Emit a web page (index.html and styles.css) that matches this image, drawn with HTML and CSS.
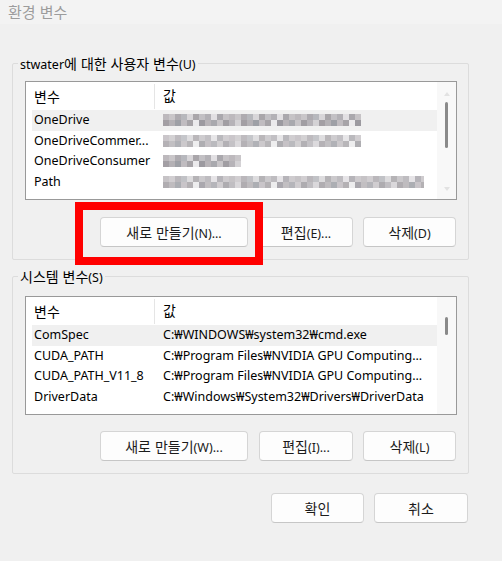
FILE: index.html
```html
<!DOCTYPE html>
<html lang="ko">
<head>
<meta charset="utf-8">
<title>환경 변수</title>
<link rel="stylesheet" href="styles.css">
</head>
<body>
<div class="dialog">
  <div class="titlebar">환경 변수</div>
  <div class="content">
    <fieldset class="group group-user">
      <legend>stwater<span class="ko">에 대한 사용자 변수</span>(U)</legend>
      <div class="list">
        <div class="list-body">
          <div class="header"><div class="c1"><span class="ko">변수</span></div><div class="c2"><span class="ko">값</span></div></div>
          <div class="row sel"><div class="c1">OneDrive</div><div class="c2"><span class="mosaic m1"></span></div></div>
          <div class="row"><div class="c1">OneDriveCommer...</div><div class="c2"><span class="mosaic m2"></span></div></div>
          <div class="row"><div class="c1">OneDriveConsumer</div><div class="c2"><span class="mosaic m3"></span></div></div>
          <div class="row"><div class="c1">Path</div><div class="c2"><span class="mosaic m4"></span></div></div>
        </div>
        <div class="scrollbar">
          <span class="arrow arrow-up"></span>
          <span class="thumb thumb-user"></span>
          <span class="arrow arrow-down"></span>
        </div>
      </div>
      <div class="buttons">
        <button class="btn btn-new"><span class="ko">새로 만들기</span>(N)...</button>
        <button class="btn btn-edit"><span class="ko">편집</span>(E)...</button>
        <button class="btn btn-del"><span class="ko">삭제</span>(D)</button>
      </div>
      <div class="highlight-box"></div>
    </fieldset>

    <fieldset class="group group-sys">
      <legend><span class="ko">시스템 변수</span>(S)</legend>
      <div class="list">
        <div class="list-body">
          <div class="header"><div class="c1"><span class="ko">변수</span></div><div class="c2"><span class="ko">값</span></div></div>
          <div class="row sel"><div class="c1">ComSpec</div><div class="c2">C:₩WINDOWS₩system32₩cmd.exe</div></div>
          <div class="row"><div class="c1">CUDA_PATH</div><div class="c2">C:₩Program Files₩NVIDIA GPU Computing...</div></div>
          <div class="row"><div class="c1">CUDA_PATH_V11_8</div><div class="c2">C:₩Program Files₩NVIDIA GPU Computing...</div></div>
          <div class="row"><div class="c1">DriverData</div><div class="c2">C:₩Windows₩System32₩Drivers₩DriverData</div></div>
        </div>
        <div class="scrollbar">
          <span class="thumb thumb-sys"></span>
        </div>
      </div>
      <div class="buttons">
        <button class="btn btn-new"><span class="ko">새로 만들기</span>(W)...</button>
        <button class="btn btn-edit"><span class="ko">편집</span>(I)...</button>
        <button class="btn btn-del"><span class="ko">삭제</span>(L)</button>
      </div>
    </fieldset>

    <div class="footer">
      <button class="btn btn-ok"><span class="ko">확인</span></button>
      <button class="btn btn-cancel"><span class="ko">취소</span></button>
    </div>
  </div>
</div>
</body>
</html>
```

FILE: styles.css
```css
* { box-sizing: border-box; }

html, body {
  margin: 0;
  padding: 0;
  background: #f0f0f0;
}

body {
  width: 502px;
  height: 561px;
  overflow: hidden;
  font-family: "Noto Sans", "Noto Sans CJK KR", sans-serif;
  font-size: 12.5px;
  color: #000;
}

.ko {
  font-family: "Noto Sans CJK KR", sans-serif;
  font-size: 14px;
}

.titlebar {
  height: 24px;
  line-height: 24px;
  padding-left: 8px;
  font-family: "Noto Sans CJK KR", sans-serif;
  font-size: 15px;
  color: #9c9c9c;
  background: #f3f3f3;
}

.content {
  padding: 31px 0 0 12px;
}

.group {
  position: relative;
  width: 457px;
  margin: 0;
  border: 1px solid #dcdcdc;
  border-radius: 2px;
  padding: 10px 11px 12px 12px;
}

.group legend {
  height: 16px;
  line-height: 16px;
  padding: 0 2px;
  margin-left: -7px;
}

.group-sys {
  margin-top: 8px;
  padding-top: 12px;
}

.list {
  display: flex;
  height: 119px;
  background: #fff;
  border: 1px solid #999;
}

.list-body {
  flex: 1;
  padding-left: 6px;
  overflow: hidden;
}

.header {
  display: flex;
  height: 28px;
  align-items: center;
}

.header .c1 {
  width: 123px;
  height: 25px;
  line-height: 25px;
  padding-left: 2px;
  border-right: 1px solid #e5e5e5;
}

.header .c2 {
  padding-left: 8px;
  line-height: 25px;
}

.row {
  display: flex;
  height: 20.5px;
  line-height: 20.5px;
  white-space: nowrap;
}

.row.sel {
  background: #f0f0f0;
}

.row .c1 {
  width: 122px;
  padding-left: 2px;
  overflow: hidden;
}

.row .c2 {
  padding-left: 9px;
  overflow: hidden;
  display: flex;
  align-items: center;
}

.scrollbar {
  width: 19px;
  background: #f8f8f8;
  display: flex;
  flex-direction: column;
  align-items: center;
}

.arrow {
  width: 0;
  height: 0;
  border-left: 3.5px solid transparent;
  border-right: 3.5px solid transparent;
}

.arrow-up {
  margin-top: 10px;
  border-bottom: 4px solid #e2e2e2;
}

.arrow-down {
  margin-top: auto;
  margin-bottom: 8px;
  border-top: 4px solid #e2e2e2;
}

.thumb {
  width: 3px;
  background: #8a8a8a;
  border-radius: 2px;
}

.thumb-user {
  height: 46px;
  margin-top: 6px;
}

.thumb-sys {
  height: 18px;
  margin-top: 20px;
}

.mosaic {
  display: block;
  height: 12px;
  background:
    repeating-linear-gradient(90deg, #bdb9bd 0 6px, #c9c6c9 6px 12px, #aeabb0 12px 18px, #b7b8bd 18px 24px, #d8d6d9 24px 30px, #a9a6aa 30px 36px, #c2c0c4 36px 42px, #b3b1b6 42px 48px, #e2e0e3 48px 54px, #aaa8ad 54px 60px, #c6c3c6 60px 66px) 0 0 / 100% 6px no-repeat,
    repeating-linear-gradient(90deg, #a39fa4 0 6px, #b4b1b5 6px 12px, #9ea0a6 12px 18px, #c0bcc0 18px 24px, #a7a4a8 24px 30px, #ebeaec 30px 36px, #9c9aa0 36px 42px, #b8b4b8 42px 48px, #a9a9ae 48px 54px, #c8c5c8 54px 60px, #a19ea3 60px 66px, #b6b3b8 66px 72px, #d4d2d5 72px 78px) 0 6px / 100% 6px no-repeat;
}

.m1 { width: 198px; }
.m2 { width: 198px; opacity: 0.8; }
.m3 { width: 78px; }
.m4 { width: 261px; opacity: 0.85; }

.buttons {
  display: flex;
  justify-content: flex-end;
  gap: 10px;
  margin-top: 17px;
  padding-right: 1px;
}

.btn {
  height: 30px;
  font-family: inherit;
  font-size: 12.5px;
  color: #1b1b1b;
  background: #fdfdfd;
  border: 1px solid #d5d5d5;
  border-bottom-color: #c6c6c6;
  border-radius: 4px;
  padding: 0;
  line-height: 28px;
}

.btn-new { width: 148px; margin-right: 1px; }
.btn-edit { width: 94px; }
.btn-del { width: 93px; }

.group-sys .buttons {
  margin-top: 16px;
}

.highlight-box {
  position: absolute;
  left: 62px;
  top: 131px;
  width: 188px;
  height: 63px;
  border: 8px solid #ff0000;
}

.footer {
  display: flex;
  justify-content: flex-end;
  gap: 10px;
  width: 457px;
  margin-top: 19px;
  padding-right: 1px;
}

.btn-ok { width: 93px; }
.btn-cancel { width: 94px; }
```
